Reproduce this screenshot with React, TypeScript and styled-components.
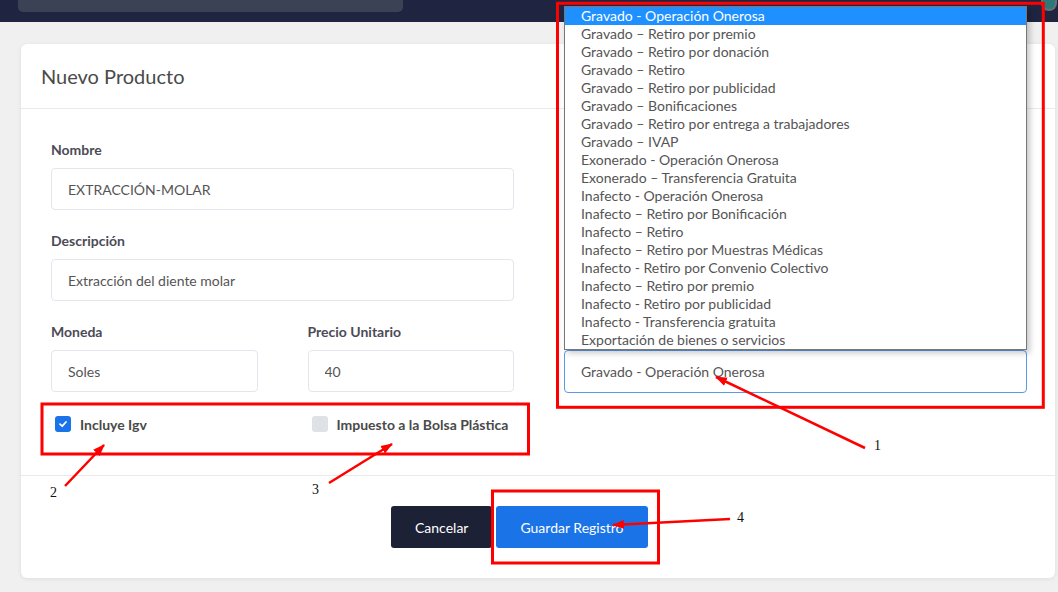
import React from "react";
import styled, { createGlobalStyle } from "styled-components";

const GlobalStyle = createGlobalStyle`
  html, body { margin: 0; padding: 0; background: #f0f0f0; }
  body { font-family: Lato, "Noto Sans", sans-serif; overflow: hidden; }
  * { box-sizing: border-box; }
`;

const Page = styled.div`
  position: relative;
  width: 1058px;
  height: 592px;
  overflow: hidden;
  background: #f0f0f0;
`;

const TopBar = styled.header`
  height: 22px;
  background: #1f2540;
  display: flex;
  align-items: flex-start;
  justify-content: space-between;
  padding: 0 1px 0 18px;
`;

const SearchBox = styled.div`
  width: 385px;
  height: 12px;
  background: #3c4256;
  border-radius: 0 0 5px 5px;
`;

const Avatar = styled.div`
  width: 16px;
  height: 11px;
  background: #2b7a78;
  border: 2px solid #6b7078;
  border-top: none;
  border-radius: 0 0 9px 9px;
`;

const Card = styled.section`
  margin: 22px 0 0 21px;
  width: 1034px;
  background: #ffffff;
  border-radius: 6px;
  box-shadow: 0 1px 4px rgba(0, 0, 0, 0.08);
`;

const CardHeader = styled.div`
  height: 65px;
  padding: 0 20px;
  display: flex;
  align-items: center;
  border-bottom: 1px solid #e9e9ec;
`;

const Title = styled.h1`
  margin: 0;
  font-size: 20px;
  font-weight: 400;
  color: #4a4a4a;
`;

const CardBody = styled.div`
  padding: 31px 28px 41px 30px;
`;

const FormGrid = styled.div`
  display: grid;
  grid-template-columns: 1fr 1fr;
  column-gap: 50px;
  row-gap: 21px;
`;

const Cell = styled.div<{ $col: number; $row: number }>`
  grid-column: ${(p) => p.$col};
  grid-row: ${(p) => p.$row};
  min-width: 0;
`;

const FieldGroup = styled.div`
  display: flex;
  flex-direction: column;
`;

const Label = styled.label`
  font-size: 14px;
  font-weight: 700;
  line-height: 20px;
  color: #4b4b57;
  margin-bottom: 8px;
`;

const LabelSpacer = styled.div`
  height: 20px;
  margin-bottom: 8px;
`;

const TextInput = styled.input`
  height: 42px;
  width: 100%;
  border: 1px solid #e5e5ee;
  border-radius: 4px;
  padding: 0 16px;
  font-family: Lato, "Noto Sans", sans-serif;
  font-size: 14px;
  color: #555;
  background: #fff;
  outline: none;
`;

const TwoCols = styled.div`
  display: grid;
  grid-template-columns: 1fr 1fr;
  column-gap: 50px;
`;

const CheckItem = styled.div`
  display: flex;
  align-items: center;
  gap: 9px;
  height: 20px;
  padding-left: 4px;
`;

const CheckBox = styled.span<{ $checked?: boolean }>`
  width: 16px;
  height: 16px;
  border-radius: 3px;
  background: ${(p) => (p.$checked ? "#1a73e8" : "#dee2e6")};
  display: inline-flex;
  align-items: center;
  justify-content: center;
`;

const CheckText = styled.span`
  font-size: 14px;
  font-weight: 700;
  color: #4a4a4a;
`;

const SelectWrap = styled.div`
  position: relative;
`;

const SelectBox = styled.div`
  height: 43px;
  border: 1px solid #5a9be8;
  border-radius: 4px;
  padding: 0 16px;
  display: flex;
  align-items: center;
  font-size: 14px;
  color: #555;
  background: #fff;
`;

const OptionList = styled.ul`
  position: absolute;
  left: 0;
  right: 0;
  bottom: 100%;
  margin: 0;
  padding: 0;
  list-style: none;
  background: #fff;
  border: 1px solid #777;
  box-shadow: 3px 3px 6px rgba(0, 0, 0, 0.22);
  z-index: 5;
`;

const Option = styled.li<{ $active?: boolean }>`
  height: 18px;
  line-height: 18px;
  padding-left: 16px;
  font-size: 14px;
  white-space: nowrap;
  color: ${(p) => (p.$active ? "#ffffff" : "#555")};
  background: ${(p) => (p.$active ? "#1e90ff" : "transparent")};
`;

const CardFooter = styled.div`
  border-top: 1px solid #e9e9ec;
  padding: 30px 0 30px 370px;
  display: flex;
  gap: 4px;
`;

const Button = styled.button<{ $variant: "dark" | "primary" }>`
  height: 42px;
  padding: 0 24px;
  border: none;
  border-radius: 3px;
  font-family: Lato, "Noto Sans", sans-serif;
  font-size: 14px;
  color: #fff;
  background: ${(p) => (p.$variant === "dark" ? "#1c2135" : "#1a74e8")};
`;

const Overlay = styled.svg`
  position: absolute;
  top: 0;
  left: 0;
  pointer-events: none;
  z-index: 10;
`;

const options = [
  "Gravado - Operación Onerosa",
  "Gravado – Retiro por premio",
  "Gravado – Retiro por donación",
  "Gravado – Retiro",
  "Gravado – Retiro por publicidad",
  "Gravado – Bonificaciones",
  "Gravado – Retiro por entrega a trabajadores",
  "Gravado – IVAP",
  "Exonerado - Operación Onerosa",
  "Exonerado – Transferencia Gratuita",
  "Inafecto - Operación Onerosa",
  "Inafecto – Retiro por Bonificación",
  "Inafecto – Retiro",
  "Inafecto – Retiro por Muestras Médicas",
  "Inafecto - Retiro por Convenio Colectivo",
  "Inafecto – Retiro por premio",
  "Inafecto - Retiro por publicidad",
  "Inafecto - Transferencia gratuita",
  "Exportación de bienes o servicios",
];

const arrows = [
  { x1: 865, y1: 448, x2: 716, y2: 377 },
  { x1: 65, y1: 486, x2: 104, y2: 445 },
  { x1: 329, y1: 483, x2: 392, y2: 444 },
  { x1: 730, y1: 519, x2: 613, y2: 525 },
];

const labels = [
  { x: 874, y: 450, t: "1" },
  { x: 50, y: 497, t: "2" },
  { x: 312, y: 494, t: "3" },
  { x: 737, y: 522, t: "4" },
];

export default function App() {
  return (
    <Page>
      <GlobalStyle />
      <TopBar>
        <SearchBox />
        <Avatar />
      </TopBar>
      <Card>
        <CardHeader>
          <Title>Nuevo Producto</Title>
        </CardHeader>
        <CardBody>
          <FormGrid>
            <Cell $col={1} $row={1}>
              <FieldGroup>
                <Label>Nombre</Label>
                <TextInput readOnly value="EXTRACCIÓN-MOLAR" />
              </FieldGroup>
            </Cell>
            <Cell $col={1} $row={2}>
              <FieldGroup>
                <Label>Descripción</Label>
                <TextInput readOnly value="Extracción del diente molar" />
              </FieldGroup>
            </Cell>
            <Cell $col={1} $row={3}>
              <TwoCols>
                <FieldGroup>
                  <Label>Moneda</Label>
                  <TextInput readOnly value="Soles" />
                </FieldGroup>
                <FieldGroup>
                  <Label>Precio Unitario</Label>
                  <TextInput readOnly value="40" />
                </FieldGroup>
              </TwoCols>
            </Cell>
            <Cell $col={2} $row={3}>
              <FieldGroup>
                <LabelSpacer />
                <SelectWrap>
                  <OptionList>
                    {options.map((o, i) => (
                      <Option key={o} $active={i === 0}>
                        {o}
                      </Option>
                    ))}
                  </OptionList>
                  <SelectBox>Gravado - Operación Onerosa</SelectBox>
                </SelectWrap>
              </FieldGroup>
            </Cell>
            <Cell $col={1} $row={4}>
              <TwoCols>
                <CheckItem>
                  <CheckBox $checked>
                    <svg width="10" height="10" viewBox="0 0 10 10">
                      <path d="M2 5.2 L4.2 7.2 L8 3" fill="none" stroke="#fff" strokeWidth="1.8" strokeLinecap="round" strokeLinejoin="round" />
                    </svg>
                  </CheckBox>
                  <CheckText>Incluye Igv</CheckText>
                </CheckItem>
                <CheckItem>
                  <CheckBox />
                  <CheckText>Impuesto a la Bolsa Plástica</CheckText>
                </CheckItem>
              </TwoCols>
            </Cell>
          </FormGrid>
        </CardBody>
        <CardFooter>
          <Button $variant="dark">Cancelar</Button>
          <Button $variant="primary">Guardar Registro</Button>
        </CardFooter>
      </Card>
      <Overlay width="1058" height="592" viewBox="0 0 1058 592">
        <defs>
          <marker id="ah" markerUnits="userSpaceOnUse" markerWidth="12" markerHeight="10" refX="11" refY="5" orient="auto">
            <path d="M0,0.5 L12,5 L0,9.5 z" fill="#ff0000" />
          </marker>
        </defs>
        <g fill="none" stroke="#ff0000" strokeWidth="3">
          <rect x="557.5" y="3.3" width="485.8" height="404" />
          <rect x="42" y="404" width="486.5" height="50" />
          <rect x="492.5" y="491" width="166" height="72" />
        </g>
        {arrows.map((a, i) => (
          <line key={i} x1={a.x1} y1={a.y1} x2={a.x2} y2={a.y2} stroke="#ff0000" strokeWidth="2.5" markerEnd="url(#ah)" />
        ))}
        {labels.map((l) => (
          <text key={l.t} x={l.x} y={l.y} fontFamily='"Liberation Serif", serif' fontSize="14" fill="#111">
            {l.t}
          </text>
        ))}
      </Overlay>
    </Page>
  );
}
